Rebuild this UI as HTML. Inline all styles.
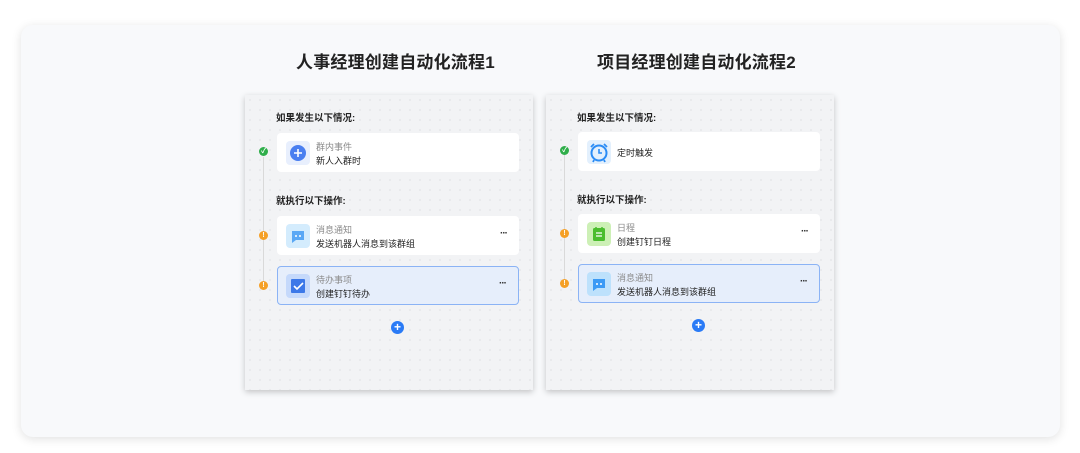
<!DOCTYPE html>
<html><head><meta charset="utf-8"><style>
*{margin:0;padding:0;box-sizing:border-box}
body{width:1080px;height:453px;background:#fff;font-family:"Liberation Sans","Noto Sans CJK SC",sans-serif;position:relative;overflow:hidden;color:#1f1f1f}
.outer{position:absolute;left:21px;top:25px;width:1039px;height:412px;background:#f8f9fb;border-radius:12px;box-shadow:0 2px 10px rgba(0,0,0,.12)}
.title{position:absolute;top:48px;font-size:17px;font-weight:bold;letter-spacing:.2px;color:#222;white-space:nowrap}
.panel{position:absolute;top:95px;width:288px;height:295px;background-color:#f2f3f5;background-image:radial-gradient(#e3e4e7 0.7px,transparent 1px);background-size:10px 10px;box-shadow:0 2px 6px rgba(0,0,0,.22)}
.h{position:absolute;left:31px;font-size:9.5px;font-weight:bold;color:#222}
.line{position:absolute;left:18px;width:1px;background:#d9d9d9}
.dot{position:absolute;left:14px;width:9px;height:9px;border-radius:50%;color:#fff;font-size:7px;font-weight:bold;text-align:center;line-height:9px}
.g{background:#2fae4a}.o{background:#f5a027}
.card{position:absolute;left:32px;width:242px;height:39px;background:#fff;border-radius:4px}
.card.sel{background:#e6eefb;border:1px solid #8bb3f5}
.ic{position:absolute;left:9px;top:8px;width:24px;height:24px;border-radius:4px}
.t1{position:absolute;left:39px;top:7px;font-size:9px;color:#8a8a8a}
.t2{position:absolute;left:39px;top:21px;font-size:9px;color:#222}
.t0{position:absolute;left:39px;top:14px;font-size:9px;color:#222}
.more{position:absolute;right:12px;top:12px;font-size:10px;font-weight:bold;letter-spacing:-1px;color:#333}
.plus{position:absolute;width:13px;height:13px;border-radius:50%;background:#2a7bf6;color:#fff;font-size:12px;line-height:12px;text-align:center;font-weight:bold}
</style></head><body>
<div class="outer"></div>
<div class="title" style="left:296px">人事经理创建自动化流程1</div>
<div class="title" style="left:597px">项目经理创建自动化流程2</div>

<div class="panel" style="left:245px">
 <div class="h" style="top:15px">如果发生以下情况:</div>
 <div class="line" style="top:62px;height:130px"></div>
 <div class="dot g" style="top:52px">✓</div>
 <div class="card" style="top:38px"><div class="ic" style="background:#e8effd"><svg width="24" height="24"><circle cx="12" cy="12" r="8" fill="#4a7ff0"/><path d="M12 8v8M8 12h8" stroke="#fff" stroke-width="1.6"/></svg></div><div class="t1">群内事件</div><div class="t2">新人入群时</div></div>
 <div class="h" style="top:98px">就执行以下操作:</div>
 <div class="dot o" style="top:136px">!</div>
 <div class="card" style="top:121px"><div class="ic" style="background:#d4ecfd"><svg width="24" height="24"><path d="M6 7h12v9h-8l-4 3z" fill="#5aa8f5"/><circle cx="10" cy="12" r="1" fill="#fff"/><circle cx="14" cy="12" r="1" fill="#fff"/></svg></div><div class="t1">消息通知</div><div class="t2">发送机器人消息到该群组</div><div class="more">···</div></div>
 <div class="dot o" style="top:186px">!</div>
 <div class="card sel" style="top:171px"><div class="ic" style="background:#c5d9fb;left:8px;top:7px"><svg width="24" height="24"><rect x="5" y="5" width="14" height="14" rx="1" fill="#3c78e8"/><path d="M8 12l3 3 6-6" stroke="#fff" stroke-width="1.6" fill="none"/></svg></div><div class="t1" style="top:6px;left:38px">待办事项</div><div class="t2" style="top:20px;left:38px">创建钉钉待办</div><div class="more" style="top:11px">···</div></div>
 <div class="plus" style="left:146px;top:226px">+</div>
</div>

<div class="panel" style="left:546px">
 <div class="h" style="top:15px">如果发生以下情况:</div>
 <div class="line" style="top:60px;height:130px"></div>
 <div class="dot g" style="top:51px">✓</div>
 <div class="card" style="top:37px"><div class="ic" style="background:#e3f0fd"><svg width="24" height="24"><circle cx="12" cy="13" r="7.5" fill="none" stroke="#2b8cf5" stroke-width="2"/><path d="M12 9v4h3" stroke="#2b8cf5" stroke-width="1.6" fill="none"/><path d="M4 7l3-3M20 7l-3-3M7 20l-1 2M17 20l1 2" stroke="#2b8cf5" stroke-width="1.8"/></svg></div><div class="t0">定时触发</div></div>
 <div class="h" style="top:97px">就执行以下操作:</div>
 <div class="dot o" style="top:134px">!</div>
 <div class="card" style="top:119px"><div class="ic" style="background:#cdf0b6"><svg width="24" height="24"><rect x="6" y="6" width="12" height="13" rx="1.5" fill="#4bbd2f"/><path d="M9 5v3M15 5v3" stroke="#4bbd2f" stroke-width="1.5"/><path d="M9 11h6M9 14h6" stroke="#fff" stroke-width="1.2"/></svg></div><div class="t1">日程</div><div class="t2">创建钉钉日程</div><div class="more">···</div></div>
 <div class="dot o" style="top:184px">!</div>
 <div class="card sel" style="top:169px"><div class="ic" style="background:#bde1fc;left:8px;top:7px"><svg width="24" height="24"><path d="M6 7h12v9h-8l-4 3z" fill="#3b9af5"/><circle cx="10" cy="12" r="1" fill="#fff"/><circle cx="14" cy="12" r="1" fill="#fff"/></svg></div><div class="t1" style="top:6px;left:38px">消息通知</div><div class="t2" style="top:20px;left:38px">发送机器人消息到该群组</div><div class="more" style="top:11px">···</div></div>
 <div class="plus" style="left:146px;top:224px">+</div>
</div>
</body></html>
